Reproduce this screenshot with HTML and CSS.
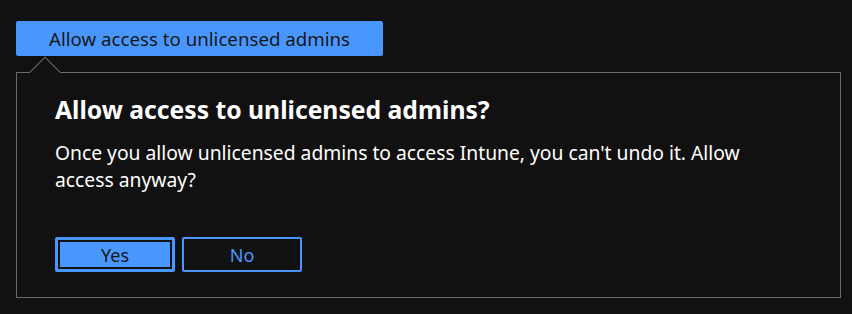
FILE: index.html
```html
<!DOCTYPE html>
<html lang="en">
<head>
  <meta charset="UTF-8" />
  <title>Allow access to unlicensed admins</title>
  <link rel="stylesheet" href="styles.css">
</head>
<body>
  <div class="wrap">
    <button class="trigger">Allow access to unlicensed admins</button>

    <div class="callout">
      <span class="beak"></span>
      <h1>Allow access to unlicensed admins?</h1>
      <p>Once you allow unlicensed admins to access Intune, you can't undo it. Allow access anyway?</p>
      <div class="actions">
        <button class="btn primary">Yes</button>
        <button class="btn">No</button>
      </div>
    </div>
  </div>
</body>
</html>
```

FILE: styles.css
```css
:root {
  --bg: #111111;
  --blue: #4a96ff;
  --line: #6b6b6b;
  --text: #ffffff;
}

* {
  box-sizing: border-box;
  margin: 0;
  padding: 0;
  font-family: 'Noto Sans', 'Open Sans', sans-serif;
}

body {
  background: var(--bg);
  color: var(--text);
}

.wrap {
  padding: 21px 12px 0 16px;
}

.trigger {
  display: block;
  width: 367px;
  height: 35px;
  background: var(--blue);
  color: #161616;
  border: none;
  border-radius: 2px;
  font-size: 18.7px;
}

.callout {
  position: relative;
  margin-top: 16px;
  width: 825px;
  height: 226px;
  border: 1px solid var(--line);
  padding: 21px 38px;
}

.beak {
  position: absolute;
  top: -12px;
  left: 17px;
  width: 22px;
  height: 22px;
  background: var(--bg);
  border-left: 1px solid var(--line);
  border-top: 1px solid var(--line);
  transform: rotate(45deg);
}

h1 {
  font-size: 24.7px;
  font-weight: 700;
  line-height: 32px;
}

p {
  margin-top: 13px;
  font-size: 19.3px;
  line-height: 27px;
  max-width: 720px;
}

.actions {
  display: flex;
  gap: 7px;
  margin-top: 44px;
}

.btn {
  width: 120px;
  height: 35px;
  background: var(--bg);
  color: var(--blue);
  border: 2px solid var(--blue);
  border-radius: 2px;
  font-size: 18px;
}

.btn.primary {
  background: var(--blue);
  color: #161616;
  box-shadow: inset 0 0 0 1px var(--blue), inset 0 0 0 3px #111;
}
```
